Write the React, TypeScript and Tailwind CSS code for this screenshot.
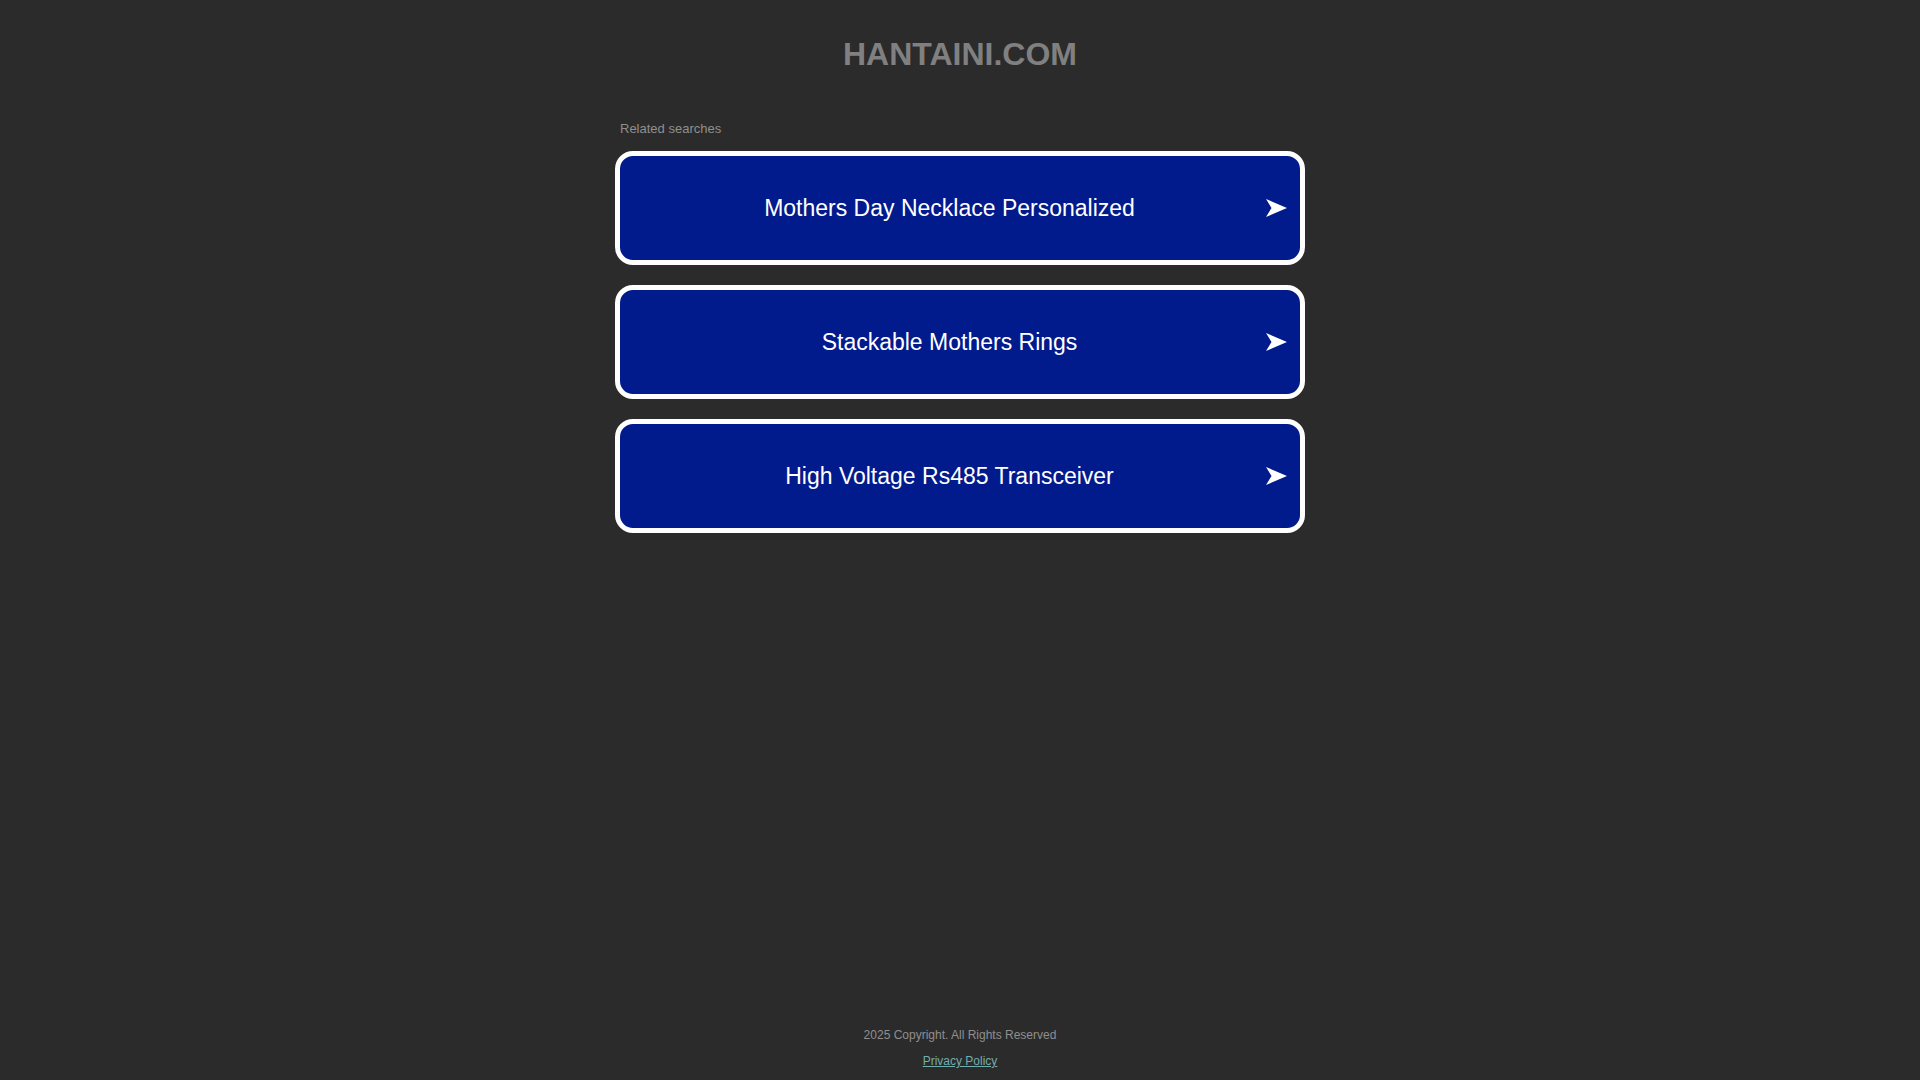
const searches = [
  "Mothers Day Necklace Personalized",
  "Stackable Mothers Rings",
  "High Voltage Rs485 Transceiver",
];

function Arrow() {
  return (
    <svg width="21" height="18" viewBox="0 0 21 18" className="shrink-0">
      <path d="M0 0 L21 9 L0 18 L5.5 9 Z" fill="#ffffff" />
    </svg>
  );
}

export default function App() {
  return (
    <div
      className="min-h-screen flex flex-col bg-[#2b2b2b]"
      style={{ fontFamily: '"Liberation Sans", Arial, sans-serif' }}
    >
      <h1 className="pt-[36px] text-center text-[32px] leading-[36px] font-bold text-[#808080]">
        HANTAINI.COM
      </h1>

      <div className="mx-auto w-[690px] mt-[49px]">
        <div className="pl-[5px] text-[13px] leading-[15px] text-[#8f8f8f]">Related searches</div>

        <div className="mt-[15px] flex flex-col gap-[20px]">
          {searches.map((s) => (
            <a
              key={s}
              href="#"
              className="h-[114px] flex items-center rounded-[18px] border-[5px] border-white bg-[#011a8c] text-white"
            >
              <span className="flex-1 pl-[13px] text-center text-[23px] leading-[26px]">{s}</span>
              <span className="mr-[13px]">
                <Arrow />
              </span>
            </a>
          ))}
        </div>
      </div>

      <footer className="mt-auto pb-[12px] flex flex-col items-center gap-[12px] text-[12px] leading-[14px]">
        <div className="text-[#8f8f8f]">2025 Copyright. All Rights Reserved</div>
        <a href="#" className="underline text-[#70aeae]">
          Privacy Policy
        </a>
      </footer>
    </div>
  );
}
